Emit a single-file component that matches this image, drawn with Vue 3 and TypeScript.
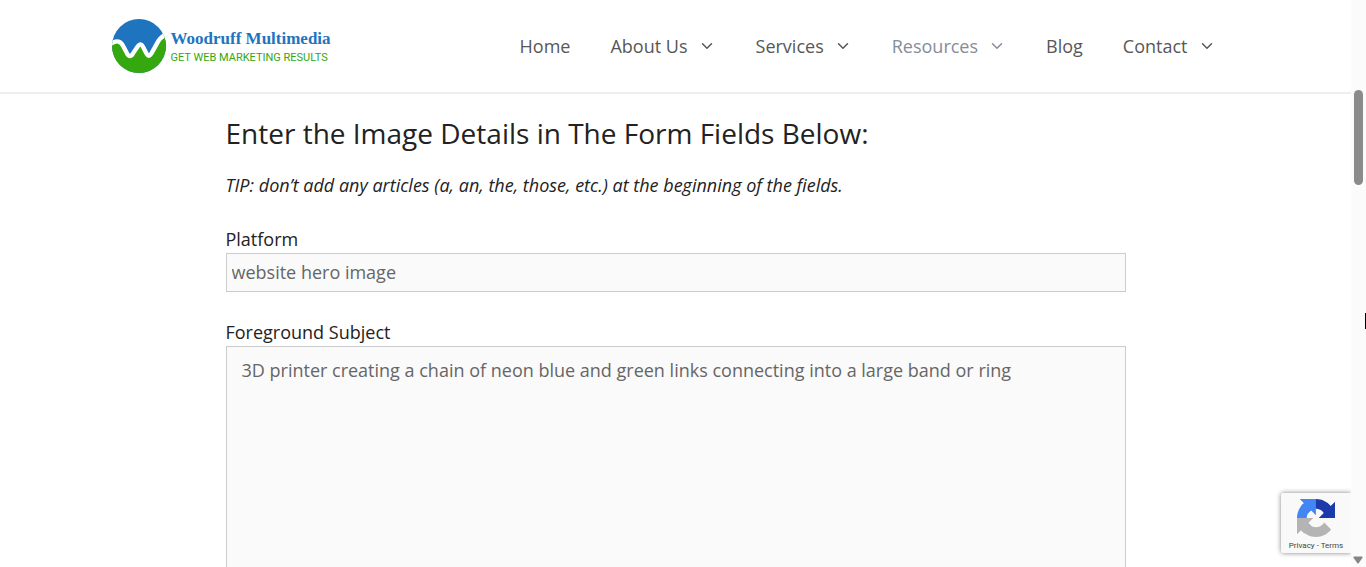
<script setup lang="ts">
import { ref } from 'vue'

interface NavItem {
  label: string
  menu: boolean
  active?: boolean
}

const items: NavItem[] = [
  { label: 'Home', menu: false },
  { label: 'About Us', menu: true },
  { label: 'Services', menu: true },
  { label: 'Resources', menu: true, active: true },
  { label: 'Blog', menu: false },
  { label: 'Contact', menu: true },
]

const platform = ref('website hero image')
const subject = ref('3D printer creating a chain of neon blue and green links connecting into a large band or ring')
</script>

<template>
  <div class="window">
    <div class="page">
      <header class="header">
        <div class="header-inner">
          <a class="logo" href="#">
            <svg class="logo-mark" viewBox="0 0 162 162" aria-hidden="true">
              <defs>
                <clipPath id="disc"><circle cx="81" cy="81" r="81" /></clipPath>
              </defs>
              <g clip-path="url(#disc)">
                <rect width="162" height="162" fill="#1f74c0" />
                <path
                  d="M-4 74 C16 63 26 66 33 80 L45 103 Q54 119 63 103 L78 81 Q86 70 93 83 L103 103 Q110 117 118 104 L138 68 Q148 51 168 44 V166 H-4Z"
                  fill="#35a80f"
                />
                <path
                  d="M-4 74 C16 63 26 66 33 80 L45 103 Q54 119 63 103 L78 81 Q86 70 93 83 L103 103 Q110 117 118 104 L138 68 Q148 51 168 44"
                  fill="none"
                  stroke="#fff"
                  stroke-width="13"
                />
              </g>
            </svg>
            <span class="logo-text">
              <span class="logo-name">Woodruff Multimedia</span>
              <span class="logo-tag">GET WEB MARKETING RESULTS</span>
            </span>
          </a>
          <nav class="nav">
            <a v-for="item in items" :key="item.label" href="#" class="nav-link" :class="{ active: item.active }">
              {{ item.label }}
              <svg v-if="item.menu" class="arrow" viewBox="0 0 18 18" aria-hidden="true">
                <path d="M4.5 6.8 L9 11.2 L13.5 6.8" fill="none" stroke="currentColor" stroke-width="1.5" stroke-linecap="round" stroke-linejoin="round" />
              </svg>
            </a>
          </nav>
        </div>
      </header>

      <main class="content">
        <h2>Enter the Image Details in The Form Fields Below:</h2>
        <p class="tip"><em>TIP: don’t add any articles (a, an, the, those, etc.) at the beginning of the fields.</em></p>
        <form @submit.prevent>
          <div class="field">
            <label for="platform">Platform</label>
            <input id="platform" v-model="platform" type="text" />
          </div>
          <div class="field">
            <label for="subject">Foreground Subject</label>
            <textarea id="subject" v-model="subject" rows="10" spellcheck="false"></textarea>
          </div>
        </form>
      </main>

      <aside class="captcha">
        <svg class="captcha-mark" viewBox="0 0 64 64" aria-hidden="true">
          <path d="M64 31.955l-.033-1.37V4.687l-7.16 7.16C50.948 4.674 42.033.093 32.05.093c-10.4 0-19.622 4.96-25.458 12.64l11.736 11.86a15.55 15.55 0 0 1 4.754-5.334c2.05-1.6 4.952-2.906 8.968-2.906.485 0 .86.057 1.135.163 4.976.393 9.288 3.14 11.828 7.124l-8.307 8.307L64 31.953" fill="#1c3aa9" />
          <path d="M31.862.094l-1.37.033H4.594l7.16 7.16C4.58 13.147 0 22.06 0 32.046c0 10.4 4.96 19.622 12.64 25.458L24.5 45.768a15.55 15.55 0 0 1-5.334-4.754c-1.6-2.05-2.906-4.952-2.906-8.968 0-.485.057-.86.163-1.135.393-4.976 3.14-9.288 7.124-11.828l8.307 8.307L31.86.095" fill="#4285f4" />
          <path d="M.001 32.045l.033 1.37v25.898l7.16-7.16c5.86 7.173 14.774 11.754 24.76 11.754 10.4 0 19.622-4.96 25.458-12.64l-11.736-11.86a15.55 15.55 0 0 1-4.754 5.334c-2.05 1.6-4.952 2.906-8.968 2.906-.485 0-.86-.057-1.135-.163-4.976-.393-9.288-3.14-11.828-7.124l8.307-8.307c-10.522.04-22.4.066-27.295-.005" fill="#b4b4b4" />
        </svg>
        <div class="captcha-links"><a href="#">Privacy</a> - <a href="#">Terms</a></div>
      </aside>
    </div>

    <div class="scrollbar" aria-hidden="true">
      <div class="thumb"></div>
      <div class="pointer"></div>
      <svg class="down" viewBox="0 0 10 8"><path d="M1 0.5 H9 Q10 0.8 9.5 1.8 L5.8 7 Q5 8 4.2 7 L0.5 1.8 Q0 0.8 1 0.5Z" fill="#858585" /></svg>
    </div>
  </div>
</template>

<style>
body {
  margin: 0;
  background: #fff;
}
</style>

<style scoped>
* {
  box-sizing: border-box;
}
.window {
  display: flex;
  height: 100vh;
  overflow: hidden;
  font-family: 'Open Sans', 'Noto Sans', sans-serif;
  font-size: 18px;
  color: #222;
}
.page {
  position: relative;
  flex: 1;
  min-width: 0;
  overflow: hidden;
}
.header {
  border-bottom: 2px solid #eee;
}
.header-inner {
  display: flex;
  align-items: center;
  justify-content: space-between;
  max-width: 1200px;
  margin: 0 auto;
  padding: 19px 40px 19px 36px;
}
.logo {
  display: flex;
  align-items: center;
  gap: 5px;
  text-decoration: none;
}
.logo-mark {
  width: 54px;
  height: 54px;
}
.logo-text {
  display: flex;
  flex-direction: column;
  padding-top: 3px;
  white-space: nowrap;
}
.logo-name {
  font: bold 17px/20px 'Liberation Serif', serif;
  color: #1f74c0;
}
.logo-tag {
  font: 11px/18px Roboto, 'Liberation Sans', sans-serif;
  color: #35a80f;
}
.nav {
  display: flex;
  gap: 40px;
  padding-right: 20px;
}
.nav-link {
  display: flex;
  align-items: center;
  gap: 10px;
  line-height: 54px;
  color: #575757;
  text-decoration: none;
  white-space: nowrap;
}
.nav-link.active {
  color: #858d9b;
}
.arrow {
  width: 18px;
  height: 18px;
}
.content {
  max-width: 900px;
  margin: 0 auto;
  padding-top: 21px;
}
h2 {
  margin: 0 0 21px;
  font-size: 28px;
  font-weight: 400;
  line-height: 36px;
}
.tip {
  margin: 0 0 27px;
  line-height: 27px;
}
.field {
  margin-bottom: 27px;
}
label {
  display: block;
  line-height: 27px;
}
input,
textarea {
  display: block;
  width: 100%;
  border: 1px solid #ccc;
  border-radius: 0;
  background: #fafafa;
  color: #666;
  font: inherit;
  line-height: 27px;
  outline: none;
}
input {
  height: 39px;
  padding: 4px 5px 6px;
}
textarea {
  padding: 10px 15px;
  resize: none;
}
.captcha {
  position: absolute;
  right: 0;
  bottom: 14px;
  width: 70px;
  height: 60px;
  padding-top: 6px;
  border-radius: 2px 0 0 2px;
  background: #f9f9f9;
  box-shadow: 0 0 5px #808080;
  text-align: center;
}
.captcha-mark {
  display: block;
  width: 38px;
  height: 38px;
  margin: 0 auto;
}
.captcha-links {
  font: 8px/18px Roboto, sans-serif;
  color: #444;
  white-space: nowrap;
}
.captcha-links a {
  color: inherit;
  text-decoration: none;
}
.scrollbar {
  position: relative;
  width: 15px;
  background: #fbfbfb;
}
.thumb {
  position: absolute;
  top: 90px;
  left: 3px;
  width: 9px;
  height: 95px;
  border-radius: 5px;
  background: #8b8b8b;
}
.pointer {
  position: absolute;
  top: 313px;
  right: 0;
  width: 1px;
  height: 16px;
  background: #000;
}
.down {
  position: absolute;
  bottom: 3px;
  left: 2px;
  width: 10px;
  height: 8px;
}
</style>
